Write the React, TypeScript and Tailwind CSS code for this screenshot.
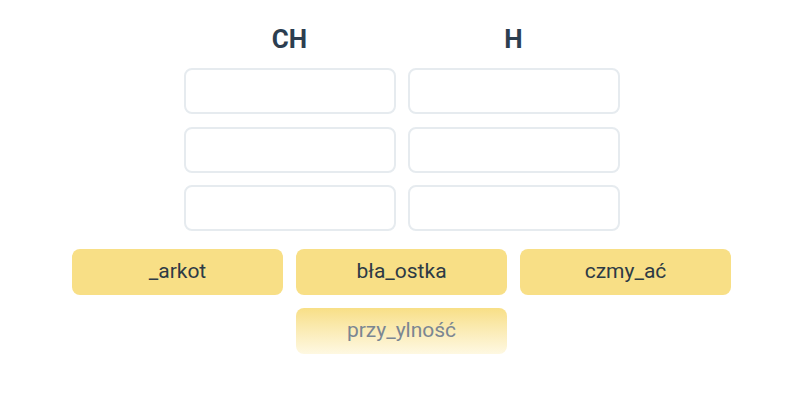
import React from "react";

const columns = ["CH", "H"];
const tiles = ["_arkot", "bła_ostka", "czmy_ać", "przy_ylność"];

const App = () => {
  return (
    <div
      className="w-[800px] h-[400px] bg-white flex flex-col items-center pt-[23px] pl-[3px]"
      style={{ fontFamily: "Roboto, 'Noto Sans', sans-serif" }}
    >
      <div className="grid grid-cols-[212px_212px] gap-x-[12px]">
        {columns.map((c) => (
          <h2
            key={c}
            className="text-center text-[26px] leading-[32px] font-bold text-[#2c3e50]"
          >
            {c}
          </h2>
        ))}
      </div>

      <div className="grid grid-cols-[212px_212px] gap-x-[12px] gap-y-[12.5px] mt-[13px]">
        {Array.from({ length: 6 }).map((_, i) => (
          <div
            key={i}
            className="h-[46px] rounded-lg border-2 border-[#e6ebef] bg-white"
          />
        ))}
      </div>

      <div className="flex flex-wrap justify-center gap-x-[13px] gap-y-[13px] w-[660px] mt-[18px]">
        {tiles.map((t, i) => {
          const last = i === tiles.length - 1;
          return (
            <div
              key={t}
              className={
                "w-[211px] h-[46px] rounded-lg flex items-center justify-center text-[21px] " +
                (last
                  ? "bg-gradient-to-b from-[#f8df86] to-[#fef8e2] text-[#7b8692]"
                  : "bg-[#f8df86] text-[#2d3a45]")
              }
            >
              {t}
            </div>
          );
        })}
      </div>
    </div>
  );
};

export default App;
